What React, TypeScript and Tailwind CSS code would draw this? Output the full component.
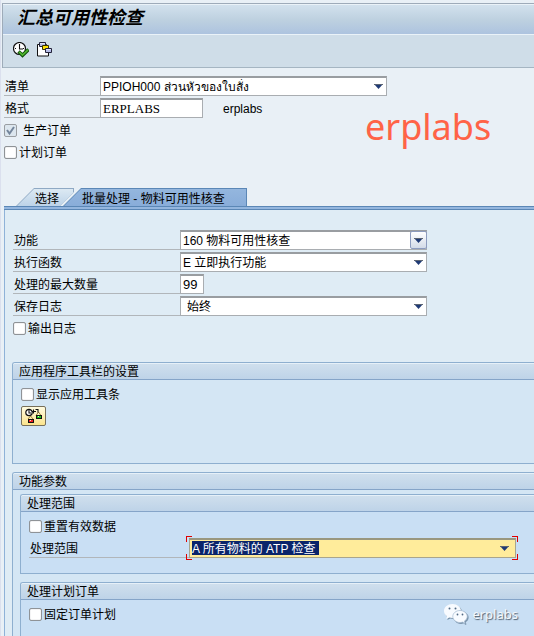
import { ReactNode, useState } from "react";

function Caret() {
  return (
    <svg aria-hidden className="h-[5px] w-[9px]" viewBox="0 0 9 5">
      <path d="M0 0h9L4.5 5z" fill="#1f3a75" />
      <path d="M0 0h9v1H0z" fill="#5b6472" />
    </svg>
  );
}

function DropDown({
  id,
  value,
  width,
  raised = false,
  indent = false
}: {
  id: string;
  value: string;
  width: string;
  raised?: boolean;
  indent?: boolean;
}) {
  return (
    <div className={`relative h-5 shrink-0 ${width}`}>
      <select
        id={id}
        className={`block h-5 w-full appearance-none border border-t-2 border-[#a9adb1] border-t-[#999da1] bg-white pr-5 leading-4 outline-none ${indent ? "pl-1.5" : "pl-0.5"}`}
      >
        <option>{value}</option>
      </select>
      <span
        className={`pointer-events-none absolute right-0 top-px flex h-[18px] w-[17px] items-center justify-center ${
          raised ? "rounded-xs border border-[#8d9cbf] bg-linear-to-b from-white to-[#d3dbe8]" : ""
        }`}
      >
        <Caret />
      </span>
    </div>
  );
}

function Row({ id, label, labelWidth, children }: { id: string; label: string; labelWidth: string; children: ReactNode }) {
  return (
    <div className="flex h-5">
      <label htmlFor={id} className={`shrink-0 whitespace-nowrap border-b border-[#b1b6ba] pl-px leading-[22px] ${labelWidth}`}>
        {label}
      </label>
      {children}
    </div>
  );
}

function Check({ label }: { label: string }) {
  return (
    <label className="flex h-5 items-center gap-0.5">
      <input
        type="checkbox"
        className="size-[13px] shrink-0 appearance-none rounded-xs border border-[#8f9397] bg-white shadow-[inset_0_0_1px_#8f9397] checked:bg-[#8fb0d5]"
      />
      <span className="pt-0.5 leading-4">{label}</span>
    </label>
  );
}

function Group({ title, tone, className = "", children }: { title: string; tone: string; className?: string; children: ReactNode }) {
  return (
    <section className={`rounded-tl-[3px] border-l border-t border-[#8eafcf] ${tone} ${className}`}>
      <h2 className="h-[17px] rounded-tl-xs border-b border-t border-b-[#85a4c8] border-t-[#e6f0f8] bg-linear-to-b from-[#cfdfed] to-[#bed3e8] pl-1.5 leading-4">
        {title}
      </h2>
      {children}
    </section>
  );
}

function ExecuteIcon() {
  return (
    <svg aria-hidden className="size-4" viewBox="0 0 16 16">
      <circle cx="6.5" cy="6.5" r="6" fill="#fff" stroke="#111" strokeWidth="1.2" />
      <path d="M6.5 2v5H10M2 6.500h1M10 6.500h1M6.500 10v1.500" fill="none" stroke="#111" strokeWidth="1.1" />
      <path d="M5.500 9.500l4 3.800L15.500 7.500" fill="none" stroke="#0d4d08" strokeWidth="3.400" />
      <path d="M6.200 9.900l3.300 3.200L15 7.900" fill="none" stroke="#4fb52f" strokeWidth="1.800" />
    </svg>
  );
}

function VariantIcon() {
  return (
    <svg aria-hidden className="size-4" viewBox="0 0 16 16">
      <path d="M.5 2.500h9l2 3v8.500H.5z" fill="#fff" stroke="#111" />
      <path d="M2.500.5h6v4h-6z" fill="#b5bce6" stroke="#23233a" />
      <path d="M3 1h5v1H3z" fill="#dfe2f8" />
      <path d="M5.500 3.500h6v4h-6z" fill="#ffe100" stroke="#3a3300" />
      <path d="M8.500 6.500h6v4h-6z" fill="#b5bce6" stroke="#23233a" />
      <path d="M9 7h5v1H9z" fill="#dfe2f8" />
    </svg>
  );
}

function ScheduleIcon() {
  return (
    <svg aria-hidden className="h-4 w-[18px] shrink-0" viewBox="0 0 18 16">
      <path d="M5.500 8L3 11M5.500 8l2.500 3M13.500 4L11 7.500M13.500 4L16 7.500" fill="none" stroke="#8a6a1c" strokeWidth=".8" />
      <circle cx="4" cy="4.500" r="3.200" fill="#fff" stroke="#111" strokeWidth="1.200" />
      <path d="M4 2v3h2M7 3.500h4M8.500 1.500v4M10.500 1.500h2.500v3" fill="none" stroke="#111" strokeWidth="1.100" />
      <path d="M3 11h6v4H3z" fill="#111" />
      <path d="M4 12h4v2H4z" fill="#f02020" />
      <path d="M11 7h6v4h-6z" fill="#111" />
      <path d="M12 8h4v2h-4z" fill="#18c418" />
      <path d="M5 12h1v1H5zM13 8h1v1h-1z" fill="#fff" opacity=".8" />
    </svg>
  );
}

function WechatIcon() {
  return (
    <svg aria-hidden className="h-5 w-6 drop-shadow-[1px_1px_0_#7790a8]" viewBox="0 0 24 20">
      <path d="M8.5 0C3.8 0 0 3.1 0 7c0 2.2 1.2 4 3 5.300L2.300 15l3-1.500c1 .3 2 .5 3.200.5 4.700 0 8.500-3.100 8.500-7s-3.800-7-8.500-7z" fill="#f8fbff" />
      <circle cx="5.500" cy="4.500" r="1" fill="#526a84" />
      <circle cx="11.500" cy="4.500" r="1" fill="#526a84" />
      <path d="M16 6.500c-4 0-7.200 2.700-7.200 6s3.200 6 7.200 6c.9 0 1.700-.1 2.500-.4l2.500 1.400-.7-2.300c1.700-1.100 2.900-2.800 2.900-4.700 0-3.300-3.200-6-7.200-6z" fill="#f8fbff" stroke="#a9bfd4" strokeWidth=".8" />
      <circle cx="13.500" cy="10.500" r=".9" fill="#526a84" />
      <circle cx="18.500" cy="10.500" r=".9" fill="#526a84" />
    </svg>
  );
}

// red focus brackets round the active field
const corners = [
  "-left-[3px] -top-0.5 border-l border-t",
  "-right-0.5 -top-0.5 border-r border-t",
  "-left-[3px] -bottom-0.5 border-b border-l",
  "-bottom-0.5 -right-0.5 border-b border-r"
];

export default function App() {
  const [tab, setTab] = useState("batch");

  return (
    <main className="relative flex min-h-screen flex-col overflow-hidden border-l border-[#dbe0ee] bg-[#e9f0f6] pt-[3px] font-['Liberation_Sans','Noto_Sans_CJK_SC',sans-serif] text-xs text-black">
      <header className="ml-px border-l border-t border-[#9eabb9]">
        <h1 className="h-[31px] border-y border-[#eaf2f8] bg-linear-to-b from-[#d2e1ed] via-[#bed1e0] to-[#adc3df] pl-3.5 text-lg font-bold italic leading-[27px]">
          汇总可用性检查
        </h1>
        <div className="flex h-[33px] items-center gap-2 border-b border-[#a5b5c2] bg-[#cfdde8] pb-0.5 pl-2.5">
          <button type="button" aria-label="执行">
            <ExecuteIcon />
          </button>
          <button type="button" aria-label="变式">
            <VariantIcon />
          </button>
        </div>
      </header>

      <div className="relative flex flex-col gap-0.5 pl-[3px] pt-2">
        <Row id="list" label="清单" labelWidth="w-24">
          <DropDown id="list" value="PPIOH000 ส่วนหัวของใบสั่ง" width="w-[287px]" />
        </Row>
        <Row id="layout" label="格式" labelWidth="w-24">
          <input
            id="layout"
            defaultValue="ERPLABS"
            className="h-5 w-[103px] border border-t-2 border-[#a9adb1] border-t-[#999da1] bg-white px-0.5 font-['Liberation_Serif',serif] text-[13px] outline-none"
          />
          <span className="pl-5 leading-[22px]">erplabs</span>
        </Row>
        <label className="flex h-5 items-center gap-1.5">
          <span className="relative flex">
            <input
              type="checkbox"
              checked
              disabled
              readOnly
              className="size-[13px] appearance-none rounded-xs border border-[#9a9ea2] bg-[#dce6ee]"
            />
            <svg aria-hidden className="absolute inset-0 size-[13px]" viewBox="0 0 13 13">
              <path d="M3 6l2.500 3.500L10 3" fill="none" stroke="#74869c" strokeWidth="2" />
            </svg>
          </span>
          <span className="pt-0.5 leading-4">生产订单</span>
        </label>
        <Check label="计划订单" />
        <p className="pointer-events-none absolute left-[364px] top-9 font-['Noto_Sans',sans-serif] text-4xl leading-[46px] text-[#ff6347]">
          erplabs
        </p>
      </div>

      <div className="mt-[26px] flex pl-[15px]" role="tablist">
        <button
          type="button"
          role="tab"
          aria-selected={tab === "select"}
          onClick={() => setTab("select")}
          className="h-[18px] w-[66px] bg-[#8fa9c4] [clip-path:polygon(18px_0,58px_0,58px_4px,44px_100%,0_100%)]"
        >
          <span className="m-px block h-[17px] bg-linear-to-b from-[#dce9f3] to-[#bdd3e8] pl-[18px] text-left leading-5 [clip-path:polygon(17px_0,56px_0,56px_4px,43px_100%,0_100%)]">
            选择
          </span>
        </button>
        <button
          type="button"
          role="tab"
          aria-selected={tab === "batch"}
          onClick={() => setTab("batch")}
          className="-ml-[19px] h-[18px] w-[184px] bg-[#5b87b6] [clip-path:polygon(18px_0,100%_0,100%_100%,0_100%)]"
        >
          <span className="m-px block h-[17px] bg-linear-to-b from-[#94b6de] to-[#89add9] pl-[18px] text-left leading-5 [clip-path:polygon(17px_0,100%_0,100%_100%,0_100%)]">
            批量处理 - 物料可用性核查
          </span>
        </button>
      </div>

      <div className="ml-[3px] flex flex-1 flex-col border-l border-[#8fb2d8] bg-[#dfecf5]">
        <div className="-ml-px h-1 border-y border-[#5b87b6] bg-[#94b6de]" />
        <div className="flex flex-col gap-0.5 pl-2 pt-5">
          <Row id="func" label="功能" labelWidth="w-[167px]">
            <DropDown id="func" value="160 物料可用性核查" width="w-[247px]" raised />
          </Row>
          <Row id="exec" label="执行函数" labelWidth="w-[167px]">
            <DropDown id="exec" value="E 立即执行功能" width="w-[247px]" />
          </Row>
          <Row id="max" label="处理的最大数量" labelWidth="w-[167px]">
            <input
              id="max"
              defaultValue="99"
              className="h-5 w-6 border border-t-2 border-[#a9adb1] border-t-[#999da1] bg-white px-0.5 text-[13px] outline-none"
            />
          </Row>
          <Row id="log" label="保存日志" labelWidth="w-[167px]">
            <DropDown id="log" value="始终" width="w-[247px]" indent />
          </Row>
          <Check label="输出日志" />
        </div>

        <div className="mt-6 flex flex-1 flex-col gap-2 pl-[7px]">
          <Group title="应用程序工具栏的设置" tone="bg-[#d4e6f4]" className="h-[102px] border-b">
            <div className="flex flex-col items-start gap-0.5 pl-2 pt-1">
              <Check label="显示应用工具条" />
              <button
                type="button"
                aria-label="应用工具"
                className="flex h-5 w-[25px] items-center justify-center rounded-xs border border-[#77705a] bg-linear-to-b from-[#fffbe0] to-[#fbe48c]"
              >
                <ScheduleIcon />
              </button>
            </div>
          </Group>

          <Group title="功能参数" tone="bg-[#d4e6f4]" className="flex flex-1 flex-col">
            <div className="flex flex-1 flex-col gap-2 pl-[7px] pt-1">
              <Group title="处理范围" tone="bg-[#c9dff4]" className="h-20 border-b">
                <div className="flex flex-col gap-0.5 pl-2 pt-1">
                  <Check label="重置有效数据" />
                  <Row id="scope" label="处理范围" labelWidth="w-40">
                    <div className="relative h-5 w-[327px] shrink-0">
                      <select
                        id="scope"
                        className="block h-5 w-full appearance-none border border-t-2 border-[#a9a58c] border-t-[#99977f] bg-[#ffec9b] bg-linear-to-r from-[#0a246a] to-[#0a246a] bg-size-[127px_14px] bg-position-[2px_1px] bg-no-repeat pl-0.5 pr-5 leading-4 text-white outline-none"
                      >
                        <option>A 所有物料的 ATP 检查</option>
                      </select>
                      <span className="pointer-events-none absolute right-[7px] top-2">
                        <Caret />
                      </span>
                      {corners.map((c) => (
                        <span key={c} className={`pointer-events-none absolute size-1.5 border-[#e00000] ${c}`} />
                      ))}
                    </div>
                  </Row>
                </div>
              </Group>
              <Group title="处理计划订单" tone="bg-[#c9dff4]" className="flex-1">
                <div className="pl-2 pt-1">
                  <Check label="固定订单计划" />
                </div>
              </Group>
            </div>
          </Group>
        </div>
      </div>

      {/* watermark */}
      <div className="pointer-events-none absolute bottom-3 right-4 flex items-center gap-1 font-['Noto_Sans',sans-serif] text-[13px] leading-5 text-[#f4f8fc] [text-shadow:1px_1px_1px_#4a5a6a]">
        <WechatIcon />
        erplabs
      </div>
    </main>
  );
}
